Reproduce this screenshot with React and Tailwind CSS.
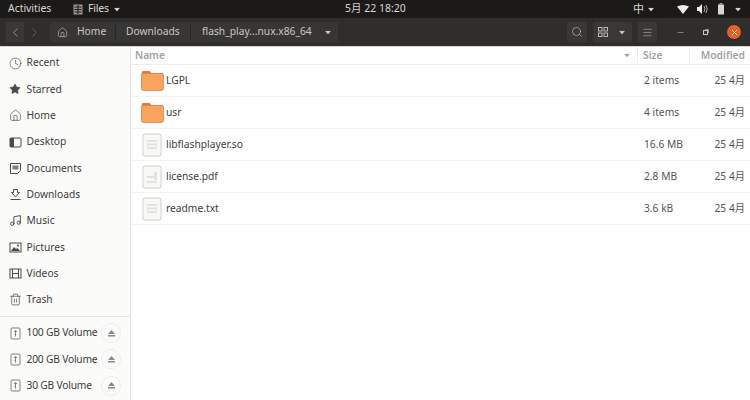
import { Home, Search, Menu, Minus, X, ChevronLeft, ChevronRight, Star, Clock, Music, Trash2 } from "lucide-react";

const font = { fontFamily: '"Noto Sans", "Noto Sans CJK SC", sans-serif' };

function Caret({ className = "" }) {
  return (
    <svg width="8" height="5" viewBox="0 0 8 5" className={className}>
      <path d="M0 0h8L4 5z" fill="currentColor" />
    </svg>
  );
}

const icons = {
  recent: <Clock size={13} strokeWidth={1.2} />,
  starred: <Star size={12} fill="currentColor" strokeWidth={1} />,
  home: <Home size={13} strokeWidth={1.2} />,
  desktop: (
    <svg width="13" height="13" viewBox="0 0 13 13">
      <rect x="1" y="2" width="11" height="9" rx="1" fill="none" stroke="currentColor" />
      <rect x="1" y="2" width="4" height="9" fill="currentColor" />
    </svg>
  ),
  documents: (
    <svg width="13" height="13" viewBox="0 0 13 13">
      <path d="M1.500 1.500h10v7l-3 3h-7z" fill="none" stroke="currentColor" />
      <path d="M3.500 3.500h6v4h-6z" fill="currentColor" opacity=".7" />
    </svg>
  ),
  downloads: (
    <svg width="13" height="13" viewBox="0 0 13 13" fill="none" stroke="currentColor">
      <path d="M4.500 1.500h4v3h2l-4 4.500-4-4.500h2z" />
      <path d="M1.500 11.500h10" />
    </svg>
  ),
  music: <Music size={13} strokeWidth={1.8} />,
  pictures: (
    <svg width="13" height="13" viewBox="0 0 13 13">
      <rect x="1" y="2" width="11" height="9" fill="none" stroke="currentColor" />
      <path d="M2 10l3-4 2 2 1.500-1L11 10z" fill="currentColor" />
      <circle cx="9" cy="4.500" r="1" fill="currentColor" />
    </svg>
  ),
  videos: (
    <svg width="13" height="13" viewBox="0 0 13 13" fill="none" stroke="currentColor">
      <rect x="1" y="2" width="11" height="9" />
      <path d="M3.500 2v9M9.500 2v9M3.500 6.500h6" />
    </svg>
  ),
  trash: <Trash2 size={13} strokeWidth={1.3} />,
  drive: (
    <svg width="13" height="13" viewBox="0 0 13 13" fill="none" stroke="currentColor" opacity=".75">
      <rect x="2" y="1" width="9" height="11" rx="1" />
      <path d="M6.500 3.500v6M5 5l1.500-1.500L8 5M5.500 7.500l1 1" />
    </svg>
  ),
};

const places = [
  ["recent", "Recent"],
  ["starred", "Starred"],
  ["home", "Home"],
  ["desktop", "Desktop"],
  ["documents", "Documents"],
  ["downloads", "Downloads"],
  ["music", "Music"],
  ["pictures", "Pictures"],
  ["videos", "Videos"],
  ["trash", "Trash"],
];

const volumes = ["100 GB Volume", "200 GB Volume", "30 GB Volume"];

const files = [
  { name: "LGPL", size: "2 items", type: "folder" },
  { name: "usr", size: "4 items", type: "folder" },
  { name: "libflashplayer.so", size: "16.6 MB", type: "file" },
  { name: "license.pdf", size: "2.8 MB", type: "pdf" },
  { name: "readme.txt", size: "3.6 kB", type: "file" },
];

function FileIcon({ type }) {
  if (type === "folder") {
    return (
      <svg width="23" height="21" viewBox="0 0 23 21">
        <path d="M0.500 3A2 2 0 0 1 2.500 1h6l2 2H21a1.500 1.500 0 0 1 1.500 1.500V8H0.500z" fill="#e8792f" />
        <rect x="0.500" y="3.500" width="22" height="17" rx="2" fill="#f9a35c" stroke="#c98a5c" strokeWidth="0.800" />
      </svg>
    );
  }
  return (
    <svg width="20" height="24" viewBox="0 0 20 24">
      <rect x="1" y="1" width="18" height="22" rx="2" fill="#f8f8f7" stroke="#cfcfcd" />
      <path
        d={type === "pdf" ? "M5 11h8v2H5zM12 7h3v8h-3zM5 16h10v2H5z" : "M5 7h10v2H5zM5 10.500h10v2H5zM5 14h10v2H5z"}
        fill="#e2e2e0"
      />
    </svg>
  );
}

export default function App() {
  return (
    <div className="flex h-[400px] w-[750px] flex-col overflow-hidden bg-white" style={font}>
      {/* top panel */}
      <div className="flex h-[18px] items-center bg-[#1c1a19] pl-2 pr-[8px] text-[10.500px] text-[#d8d6d3]">
        <span className="w-[65px] tracking-[-0.05px]">Activities</span>
        <span className="flex w-[272px] items-center">
          <svg width="10" height="11" viewBox="0 0 10 11" className="mr-[5px]">
            <rect x="0.500" y="0.500" width="9" height="10" fill="#9a9895" />
            <path d="M1.500 3h7M1.500 5.500h7M1.500 8h7M5 1v9" stroke="#1c1a19" />
          </svg>
          <span className="tracking-[-0.2px]">Files</span>
          <Caret className="ml-1 scale-75" />
        </span>
        <span>5月 22  18:20</span>
        <span className="ml-auto flex items-center">
          <span className="text-[11px]">中</span>
          <Caret className="ml-[3px] mr-[22px] scale-75" />
          <svg width="12" height="9" viewBox="0 0 12 9" className="mr-[8px]">
            <path d="M0 1.500Q6-1.500 12 1.500L6 9z" fill="#eeeeec" />
          </svg>
          <svg width="11" height="10" viewBox="0 0 11 10" className="mr-[9px]">
            <path d="M0 3h2l3-3v10L2 7H0z" fill="#eeeeec" />
            <path d="M7 2q2 3 0 6M9 1q2.500 4 0 8" stroke="#aaa" fill="none" />
          </svg>
          <svg width="8" height="12" viewBox="0 0 8 12" className="mr-[9px]">
            <rect x="1" y="1.500" width="6" height="10" fill="#d8d6d3" />
            <rect x="2.500" y="0" width="3" height="2" fill="#999" />
          </svg>
          <Caret className="scale-75" />
        </span>
      </div>

      {/* header bar */}
      <div className="flex h-[28px] items-center bg-[#302e2c] text-[10.250px] text-[#c9c7c4]">
        <div className="ml-[6px] flex h-[20px] w-[38px]">
          <span className="flex w-[18px] items-center justify-center rounded-l-[2px] bg-[#3a3836]">
            <ChevronLeft size={15} strokeWidth={1} />
          </span>
          <span className="flex w-[20px] items-center justify-center text-[#7c7a78]">
            <ChevronRight size={15} strokeWidth={1} />
          </span>
        </div>
        <div className="ml-[6px] flex h-[20px] items-center rounded-[2px] bg-[#383634]">
          <span className="flex w-[66px] items-center border-r border-[#2a2826] pl-[7px]">
            <Home size={11} strokeWidth={1.3} className="mr-[9px]" />
            Home
          </span>
          <span className="w-[75px] border-r border-[#2a2826] pl-[10px]">Downloads</span>
          <span className="flex w-[147px] items-center pl-[11px]">
            flash_play...nux.x86_64
            <Caret className="ml-3 scale-75" />
          </span>
        </div>
        <div className="ml-auto flex items-center">
          <span className="flex h-[20px] w-[20px] items-center justify-center rounded-[2px] bg-[#3a3836]">
            <Search size={12} strokeWidth={1.2} />
          </span>
          <span className="ml-[6px] flex h-[20px] w-[39px] items-center rounded-[2px] bg-[#3a3836]">
            <span className="flex w-[19px] justify-center">
              <svg width="10" height="10" viewBox="0 0 10 10" fill="none" stroke="currentColor" strokeWidth="0.900">
                <rect x="0.500" y="0.500" width="3.500" height="3.500" />
                <rect x="6" y="0.500" width="3.500" height="3.500" />
                <rect x="0.500" y="6" width="3.500" height="3.500" />
                <rect x="6" y="6" width="3.500" height="3.500" />
              </svg>
            </span>
            <span className="flex w-[20px] justify-center">
              <Caret className="scale-75" />
            </span>
          </span>
          <span className="ml-[6px] flex h-[20px] w-[19px] items-center justify-center rounded-[2px] bg-[#3a3836]">
            <Menu size={11} strokeWidth={1.1} />
          </span>
          <span className="ml-[18px] flex w-[10px] justify-center">
            <Minus size={9} strokeWidth={1.400} />
          </span>
          <span className="ml-[16px] flex w-[10px] justify-center">
            <svg width="8" height="8" viewBox="0 0 8 8" fill="none" stroke="currentColor">
              <rect x="1.500" y="2.500" width="4" height="4" />
              <path d="M3 1.500h3.500v3.500" opacity=".6" />
            </svg>
          </span>
          <span className="ml-[16px] mr-[9px] flex h-[14px] w-[14px] items-center justify-center rounded-full bg-[#e95f2b] text-white">
            <X size={9} strokeWidth={2} />
          </span>
        </div>
      </div>

      <div className="flex min-h-0 flex-1 border-t border-[#d8d6d3]">
        {/* sidebar */}
        <div className="flex w-[131px] flex-col border-r border-[#e6e5e3] bg-[#fbfbfa] text-[10.250px] text-[#3d3c3a]">
          <div className="pt-[3px]">
            {places.map(([icon, label]) => (
              <div key={label} className="flex h-[26.300px] items-center pl-[9px]">
                <span className="flex w-[17.500px] text-[#4c4b49]">{icons[icon]}</span>
                {label}
              </div>
            ))}
          </div>
          <div className="mt-[3px] border-t border-[#e6e5e3] pt-[3px]">
            {volumes.map((label) => (
              <div key={label} className="flex h-[26.300px] items-center pl-[9px]">
                <span className="flex w-[17.500px] text-[#5c5b59]">{icons.drive}</span>
                <span className="tracking-[-0.2px]">{label}</span>
                <span className="ml-auto mr-[9px] flex h-[20px] w-[20px] items-center justify-center rounded-full border border-[#eeedeb]">
                  <svg width="7" height="7" viewBox="0 0 7 7" fill="#888">
                    <path d="M3.500 0L7 4H0zM0 5h7v1.500H0z" />
                  </svg>
                </span>
              </div>
            ))}
          </div>
        </div>

        {/* file list */}
        <div className="flex-1 bg-white text-[10.250px] text-[#3d3c3a]">
          <div className="flex h-[18px] items-center border-b border-[#ececea] font-semibold text-[#a3a2a0]">
            <span className="flex w-[507px] items-center justify-between border-r border-[#ececea] pl-[4px] pr-[6px]">
              Name
              <Caret className="scale-75 text-[#a3a2a0]" />
            </span>
            <span className="w-[52px] border-r border-[#ececea] pl-[5px]">Size</span>
            <span className="flex-1 pr-[5px] text-right">Modified</span>
          </div>
          {files.map((file) => (
            <div key={file.name} className="flex h-[32px] items-center border-b border-[#f3f3f1]">
              <span className="flex w-[35px] justify-center pl-[7px]">
                <FileIcon type={file.type} />
              </span>
              <span className="w-[472px]">{file.name}</span>
              <span className="w-[52px] pl-[6px] text-[#555452]">{file.size}</span>
              <span className="flex-1 pr-[5px] text-right text-[#555452]">25 4月</span>
            </div>
          ))}
        </div>
      </div>
    </div>
  );
}
